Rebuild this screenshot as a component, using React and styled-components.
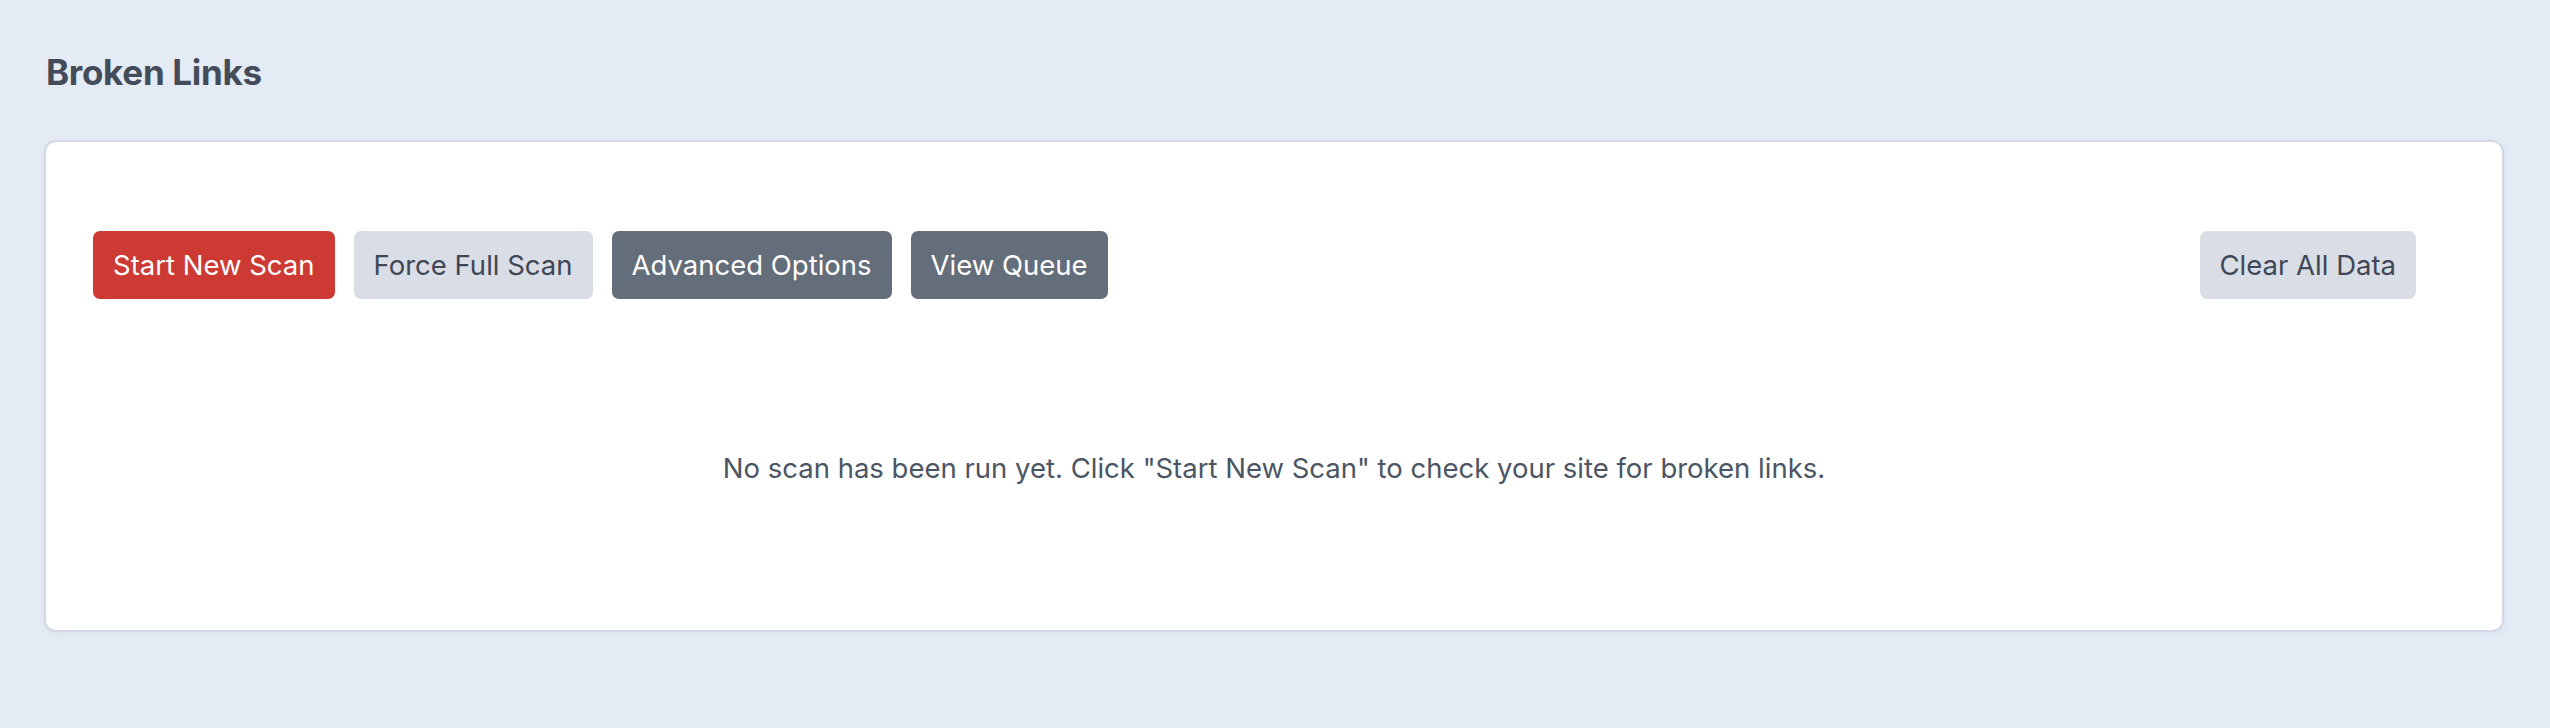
import React from 'react';
import styled, { createGlobalStyle } from 'styled-components';

const Global = createGlobalStyle`
  html, body { margin: 0; background: #e4ebf5; }
  body { font-family: Inter, "Noto Sans", sans-serif; }
`;

const Page = styled.div`
  padding: 50px 46px 0 44px;
  min-height: 728px;
  box-sizing: border-box;
`;

const Title = styled.h1`
  margin: 0 0 46px 2px;
  font-size: 35px;
  line-height: 44px;
  font-weight: 700;
  color: #444c59;
  letter-spacing: -0.3px;
`;

const Card = styled.div`
  background: #fff;
  border: 2px solid #d3dae6;
  border-radius: 12px;
  padding: 89px 86px 0 47px;
  height: 492px;
  box-sizing: border-box;
  box-shadow: 0 2px 6px rgba(100, 116, 139, 0.08);
`;

const Toolbar = styled.div`
  display: flex;
  align-items: center;
  gap: 19px;
`;

const Spacer = styled.div`
  flex: 1;
`;

const variants = {
  primary: { bg: '#cc3a33', fg: '#ffffff' },
  light: { bg: '#d9dde5', fg: '#3f4756' },
  dark: { bg: '#646d7a', fg: '#ffffff' },
};

const Button = styled.button`
  height: 68px;
  padding: 0 20px;
  border: none;
  border-radius: 7px;
  font-family: Inter, "Noto Sans", sans-serif;
  font-size: 27.5px;
  background: ${p => variants[p.$variant].bg};
  color: ${p => variants[p.$variant].fg};
  cursor: pointer;
`;

const Empty = styled.p`
  margin: 0;
  padding-top: 152px;
  padding-left: 39px;
  text-align: center;
  font-size: 27.5px;
  color: #4b5563;
`;

export default function App() {
  return (
    <Page>
      <Global />
      <Title>Broken Links</Title>
      <Card>
        <Toolbar>
          <Button $variant="primary">Start New Scan</Button>
          <Button $variant="light">Force Full Scan</Button>
          <Button $variant="dark">Advanced Options</Button>
          <Button $variant="dark">View Queue</Button>
          <Spacer />
          <Button $variant="light">Clear All Data</Button>
        </Toolbar>
        <Empty>No scan has been run yet. Click "Start New Scan" to check your site for broken links.</Empty>
      </Card>
    </Page>
  );
}
